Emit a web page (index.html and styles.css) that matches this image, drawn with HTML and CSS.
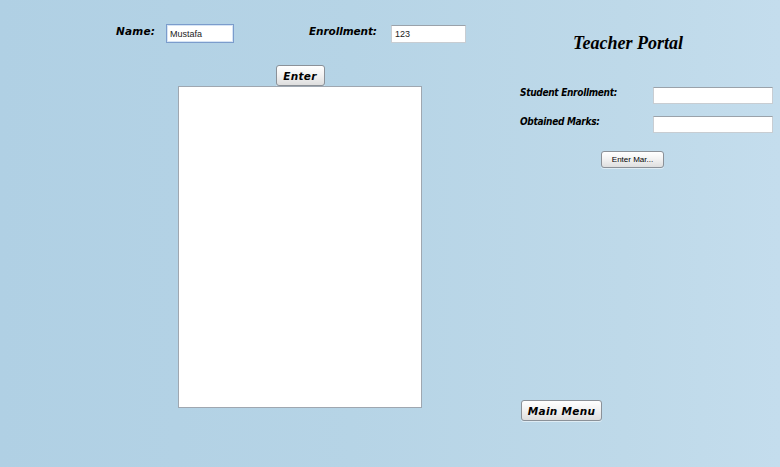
FILE: index.html
```html
<!DOCTYPE html>
<html>
<head>
<meta charset="utf-8">
<link rel="stylesheet" href="styles.css">
</head>
<body>
<div class="frame">
  <div class="left">
    <div class="top-row">
      <span class="lbl lbl-name">Name:</span>
      <div class="field field-name focused">Mustafa</div>
      <span class="lbl lbl-enr">Enrollment:</span>
      <div class="field field-enr">123</div>
    </div>
    <div class="list-col">
      <button class="btn btn-bold btn-enter">Enter</button>
      <div class="list-box"></div>
    </div>
  </div>
  <div class="right">
    <h1 class="title">Teacher Portal</h1>
    <div class="form-row row-first">
      <span class="lbl-small">Student Enrollment:</span>
      <div class="field field-wide"></div>
    </div>
    <div class="form-row row-second">
      <span class="lbl-small">Obtained Marks:</span>
      <div class="field field-wide"></div>
    </div>
    <div class="marks-btn-row">
      <button class="btn btn-plain">Enter Mar...</button>
    </div>
    <div class="spacer"></div>
    <button class="btn btn-bold btn-menu">Main Menu</button>
  </div>
</div>
</body>
</html>
```
FILE: styles.css
```css
html, body {
  margin: 0;
  padding: 0;
}
body {
  width: 780px;
  height: 467px;
  overflow: hidden;
  background: linear-gradient(90deg, #b0d0e4 0%, #b6d4e6 45%, #bed9e9 80%, #c4dded 100%);
}
.frame {
  display: flex;
  height: 467px;
}
.left {
  width: 520px;
  display: flex;
  flex-direction: column;
  padding-top: 24px;
  box-sizing: border-box;
}
.top-row {
  display: flex;
  align-items: flex-start;
  padding-left: 116px;
}
.lbl {
  font-family: "DejaVu Sans", sans-serif;
  font-weight: bold;
  font-style: oblique;
  font-size: 10.5px;
  color: #000;
  line-height: 12px;
  padding-top: 1px;
  letter-spacing: 0.2px;
}
.lbl-name { width: 50px; }
.lbl-enr { width: 82px; letter-spacing: -0.1px; }
.field {
  box-sizing: border-box;
  background: #fff;
  border: 1px solid #c8cdd2;
  border-top-color: #9aa2aa;
  font-family: "Liberation Sans", Arial, sans-serif;
  font-size: 9px;
  color: #222;
  padding-left: 3px;
  display: flex;
  align-items: center;
}
.field-name {
  width: 68px;
  height: 19px;
  margin-right: 75px;
}
.focused {
  border: 1px solid #7b9ccc;
  box-shadow: inset 0 0 0 1px #d6e4f4;
}
.field-enr {
  width: 75px;
  height: 18px;
  margin-top: 1px;
}
.list-col {
  margin-left: 178px;
  width: 244px;
  margin-top: 22px;
  display: flex;
  flex-direction: column;
  align-items: center;
}
.btn {
  box-sizing: border-box;
  border: 1px solid #8b9198;
  border-radius: 3px;
  background: linear-gradient(180deg, #ffffff 0%, #f3f3f3 45%, #dedede 100%);
  box-shadow: 0 1px 0 rgba(255,255,255,0.5);
  color: #000;
  padding: 0;
  margin: 0;
  cursor: default;
}
.btn-bold {
  font-family: "DejaVu Sans", sans-serif;
  font-weight: bold;
  font-style: oblique;
  font-size: 10.5px;
  letter-spacing: 0.3px;
}
.btn-enter {
  width: 49px;
  height: 21px;
}
.list-box {
  box-sizing: border-box;
  width: 244px;
  height: 322px;
  background: #fff;
  border: 1px solid #9fa7b0;
}
.right {
  width: 260px;
  display: flex;
  flex-direction: column;
  box-sizing: border-box;
  padding-top: 33px;
}
.title {
  margin: 0;
  width: 216px;
  text-align: center;
  font-family: "Liberation Serif", "Times New Roman", serif;
  font-weight: bold;
  font-style: italic;
  font-size: 18px;
  line-height: 20px;
  color: #000;
}
.form-row {
  display: flex;
  align-items: flex-start;
}
.row-first { margin-top: 34px; }
.row-second { margin-top: 12px; }
.lbl-small {
  width: 133px;
  font-family: "DejaVu Sans Condensed", "DejaVu Sans", sans-serif;
  font-weight: bold;
  font-style: oblique;
  font-size: 10px;
  line-height: 12px;
  letter-spacing: -0.3px;
  color: #000;
  padding-top: 0px;
}
.field-wide {
  width: 120px;
  height: 17px;
}
.marks-btn-row {
  margin-top: 18px;
  padding-left: 81px;
  display: flex;
}
.btn-plain {
  width: 63px;
  height: 17px;
  font-family: "Liberation Sans", Arial, sans-serif;
  font-size: 8px;
}
.spacer {
  flex: 1;
}
.btn-menu {
  width: 81px;
  height: 21px;
  margin-left: 1px;
  margin-bottom: 46px;
}
```
